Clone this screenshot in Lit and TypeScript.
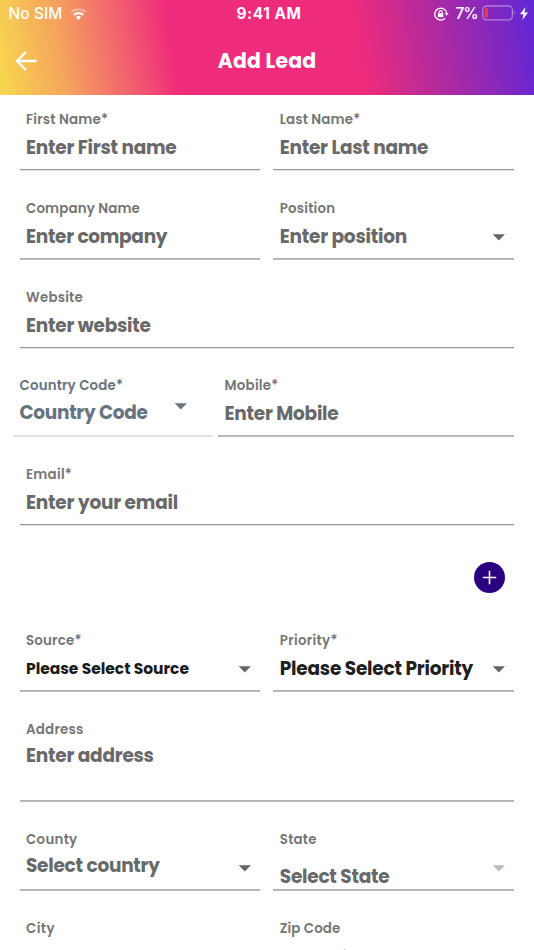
import { LitElement, html, css, svg } from "lit";
import { customElement, property } from "lit/decorators.js";

/** Text whose tracking is adjusted so that it spans a given width. */
@customElement("fit-text")
class FitText extends LitElement {
  @property() text = "";
  @property({ type: Number }) width = 0;

  static styles = css`
    :host { display: inline-block; white-space: nowrap; }
  `;

  updated() {
    const span = this.renderRoot.querySelector("span") as HTMLElement;
    span.style.letterSpacing = "0px";
    const natural = span.getBoundingClientRect().width;
    if (this.width) {
      span.style.letterSpacing = `${(this.width - natural) / this.text.length}px`;
    }
  }

  render() {
    return html`<span>${this.text}</span>`;
  }
}

type Caret = "" | "dark" | "slate" | "faint";

@customElement("form-field")
class FormField extends LitElement {
  @property() label = "";
  @property({ type: Number }) labelWidth = 0;
  @property() value = "";
  @property({ type: Number }) valueWidth = 0;
  @property() caret: Caret = "";

  static styles = css`
    :host {
      --ink: #696969;
      --label: #757575;
      --line: #979797;
      --edge: #e2e2e2;
      --size: 18.5px;
      --shift: 0px;
      --pad: 6.5px;
      --caret-shift: 0px;
      display: flex;
      flex-direction: column;
      height: 61px;
      box-sizing: border-box;
      min-width: 0;
      border-bottom: 1px solid var(--line);
      box-shadow: 0 1px var(--edge);
      padding: 1px 9px 0 var(--pad);
    }
    .label {
      height: 20px;
      line-height: 20px;
      font-size: 13.4px;
      font-weight: 600;
      color: var(--label);
    }
    .row {
      display: flex;
      justify-content: space-between;
      height: 36px;
    }
    .value {
      line-height: 36px;
      font-size: var(--size);
      font-weight: 700;
      color: var(--ink);
      margin-top: var(--shift);
    }
    svg {
      width: 13px;
      height: 7px;
      margin-top: calc(15.1px + var(--caret-shift));
    }
    .dark { fill: #666; }
    .slate { fill: #67737e; }
    .faint { fill: #bdbdbd; }
  `;

  render() {
    return html`
      <div class="label"><fit-text .text=${this.label} .width=${this.labelWidth}></fit-text></div>
      <div class="row">
        <div class="value"><fit-text .text=${this.value} .width=${this.valueWidth}></fit-text></div>
        ${this.caret
          ? html`<svg class=${this.caret} viewBox="0 0 13 7"><path d="M0.7 0.3H12.9L6.8 6.6Z" /></svg>`
          : ""}
      </div>
    `;
  }
}

const field = (cls: string, label: string, lw: number, value: string, vw: number, caret: Caret = "") => html`
  <form-field class=${cls} .label=${label} .labelWidth=${lw} .value=${value} .valueWidth=${vw} .caret=${caret}></form-field>
`;

const wifi = svg`
  <path d="M1.2 5.1A11 11 0 0 1 15.8 5.1" stroke="#fff" stroke-opacity=".4" stroke-width="2" />
  <path d="M3.7 8A7.2 7.2 0 0 1 13.3 8" stroke="#fff" stroke-width="2.1" />
  <path d="M5.7 10.1A4.3 4.3 0 0 1 11.3 10.1L8.5 13Z" fill="#fff" />
`;

@customElement("app-root")
class AppRoot extends LitElement {
  static styles = css`
    :host {
      display: block;
      height: 950px;
      overflow: hidden;
      background: #fff;
      font-family: Poppins, Inter, "Open Sans", sans-serif;
    }
    svg { display: block; fill: none; }
    header {
      height: 95px;
      color: #fff;
      background: linear-gradient(80deg, #f8d94e 0%, #f5a65c 12%, #f37d68 19%, #ef2b7b 33%, #ef2b7b 66.5%, #b02aa0 81%, #6026d6 100%);
    }
    .status {
      display: grid;
      grid-template-columns: 1fr auto 1fr;
      align-items: center;
      height: 28px;
      padding: 0 6.5px 0 8.5px;
      font-family: Inter, sans-serif;
      font-size: 15.4px;
      line-height: 28px;
      font-weight: 500;
    }
    .left, .right { display: flex; align-items: center; }
    .left { gap: 7px; }
    .left svg { margin-bottom: 1px; }
    .right { justify-content: flex-end; }
    .clock { font-weight: 700; margin-left: 2px; }
    .lock { margin: 0 7px 1px 0; }
    .battery { margin: 0 4px 2px 4px; }
    .bolt { margin-bottom: 1px; }
    .bar {
      display: grid;
      grid-template-columns: 1fr auto 1fr;
      align-items: center;
      height: 66px;
      padding: 0 15px;
    }
    .title { font-size: 20.4px; font-weight: 700; }
    main {
      display: flex;
      flex-direction: column;
      gap: 27.72px;
      padding: 14.1px 20px 0 19.5px;
    }
    .pair { display: grid; grid-template-columns: 1fr 1fr; gap: 13px; }
    .phone { display: grid; grid-template-columns: 199px 1fr; gap: 6px; margin-left: -6.5px; }
    .soft { --line: #b4b4b4; --edge: #bcbcbc; }
    .code { --ink: #67737e; --label: #67737e; --line: #dfdfdf; --edge: #e6e6e6; --shift: -1.5px; --caret-shift: -8.4px; padding-right: 25px; }
    .add { display: flex; justify-content: flex-end; height: 49.5px; padding-right: 8.7px; align-items: center; }
    .disc {
      display: grid;
      place-items: center;
      width: 31px;
      height: 31px;
      border-radius: 50%;
      background: #2a0080;
    }
    .source { --size: 15.5px; --ink: #1a1a1a; --shift: .4px; }
    .priority { --ink: #1f1f1f; --shift: .4px; }
    .address { height: 82.4px; --shift: -1.5px; }
    .country { --shift: -1.5px; }
    .state { --shift: 9px; }
    .last { padding-top: 1.6px; }
    .zip { --shift: 1.5px; }
  `;

  render() {
    return html`
      <header>
        <div class="status">
          <div class="left">
            <fit-text .text=${"No SIM"} .width=${54}></fit-text>
            <svg width="17" height="14" viewBox="0 0 17 14">${wifi}</svg>
          </div>
          <fit-text class="clock" .text=${"9:41 AM"} .width=${65}></fit-text>
          <div class="right">
            <svg class="lock" width="16" height="14" viewBox="0 0 16 14">
              <path d="M13.6 5.8A6 6 0 1 0 12.2 11.1" stroke="#fff" stroke-width="1.3" />
              <path d="M11.6 6H15.6L13.6 8.8Z" fill="#fff" />
              <path d="M6 6.6V5.2A1.6 1.6 0 0 1 9.2 5.2V6.6" stroke="#fff" stroke-width="1.1" />
              <rect x="4.9" y="6.2" width="5.4" height="4" rx=".6" fill="#fff" />
            </svg>
            <fit-text .text=${"7%"} .width=${22}></fit-text>
            <svg class="battery" width="34" height="16" viewBox="0 0 34 16">
              <rect x=".8" y="1" width="29.6" height="13.8" rx="3.8" stroke="#fff" stroke-opacity=".4" stroke-width="1.3" />
              <rect x="2.8" y="3.2" width="3" height="9.4" rx="1" fill="#ff3b30" />
              <path d="M31.8 5.6Q33.6 7.9 31.8 10.2Z" fill="#fff" fill-opacity=".5" />
            </svg>
            <svg class="bolt" width="8" height="13" viewBox="0 0 8 13">
              <path d="M5.4 0L0 7.3H3.4L2.4 13L8 5.4H4.5Z" fill="#fff" />
            </svg>
          </div>
        </div>
        <div class="bar">
          <svg width="22" height="20" viewBox="0 0 22 20">
            <path d="M21.5 10H2.4M11 .9L2 10L11 19.1" stroke="#fff" stroke-width="2.3" />
          </svg>
          <fit-text class="title" .text=${"Add Lead"} .width=${98.5}></fit-text>
        </div>
      </header>
      <main>
        <div class="pair">
          ${field("", "First Name*", 82, "Enter First name", 150.5)}
          ${field("", "Last Name*", 80.5, "Enter Last name", 148.5)}
        </div>
        <div class="pair">
          ${field("soft", "Company Name", 114, "Enter company", 141.2)}
          ${field("soft", "Position", 55.5, "Enter position", 127.2, "dark")}
        </div>
        ${field("", "Website", 57, "Enter website", 124.7)}
        <div class="phone">
          ${field("code", "Country Code*", 103.5, "Country Code", 128.2, "slate")}
          ${field("soft", "Mobile*", 54, "Enter Mobile", 114)}
        </div>
        ${field("", "Email*", 46, "Enter your email", 152)}
        <div class="add">
          <div class="disc">
            <svg width="15" height="15" viewBox="0 0 15 15">
              <path d="M7.5 .8V14.2M.8 7.5H14.2" stroke="#fff" stroke-width="1.6" />
            </svg>
          </div>
        </div>
        <div class="pair">
          ${field("soft source", "Source*", 55.5, "Please Select Source", 163, "dark")}
          ${field("soft priority", "Priority*", 58, "Please Select Priority", 193.2, "dark")}
        </div>
        ${field("soft address", "Address", 57.5, "Enter address", 127.7)}
        <div class="pair">
          ${field("soft country", "County", 51.5, "Select country", 133.7, "dark")}
          ${field("soft state", "State", 37, "Select State", 109.7, "faint")}
        </div>
        <div class="pair">
          ${field("last", "City", 29, "", 0)}
          ${field("last zip", "Zip Code", 60.5, "Enter zipcode", 127)}
        </div>
      </main>
    `;
  }
}
